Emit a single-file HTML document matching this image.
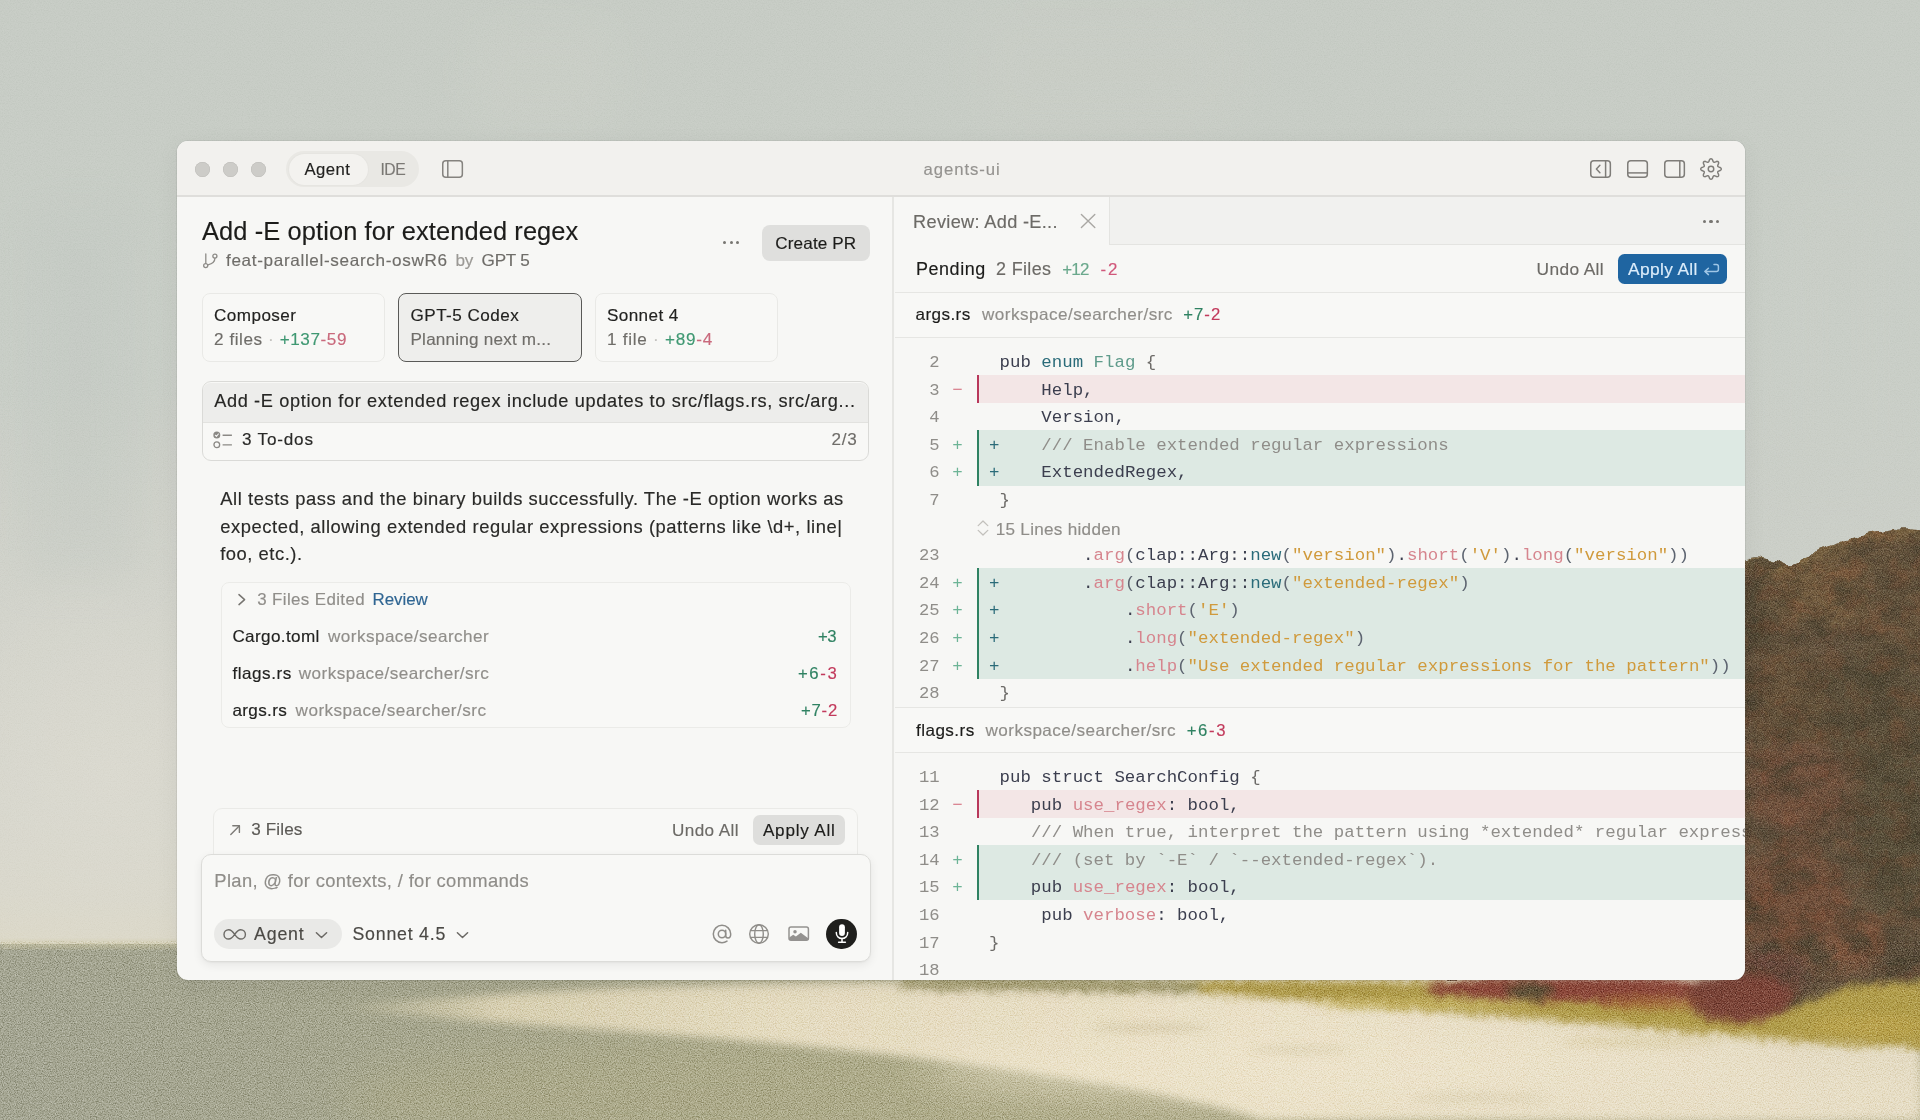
<!DOCTYPE html>
<html><head><meta charset="utf-8"><title>agents-ui</title>
<style>
html,body{margin:0;padding:0}
body{width:1920px;height:1120px;overflow:hidden;position:relative;background:#c8cdc6;font-family:'Liberation Sans', sans-serif}
.t{position:absolute;white-space:pre;margin:0;-webkit-text-stroke:.16px currentColor}
.t.m{-webkit-text-stroke:0}
#win{position:absolute;left:177px;top:141px;width:1568px;height:839px;border-radius:11px;overflow:hidden;background:#f7f7f5;box-shadow:0 0 0 1px rgba(60,60,50,.07),0 6px 26px rgba(40,40,30,.055),0 1px 3px rgba(40,40,30,.04)}
#pg{position:absolute;left:-177px;top:-141px;width:1920px;height:1120px;will-change:transform}
svg.i{position:absolute;overflow:visible}
.g{color:#2f8262} .r{color:#c23a5c}
</style></head><body>
<svg id="bg" width="1920" height="1120" viewBox="0 0 1920 1120" style="position:absolute;left:0;top:0">
<defs>
<linearGradient id="sky" x1="0" y1="0" x2="0" y2="1120" gradientUnits="userSpaceOnUse">
<stop offset="0" stop-color="#c7ccc5"/>
<stop offset="0.30" stop-color="#c9cec7"/>
<stop offset="0.55" stop-color="#cccfc8"/>
<stop offset="0.72" stop-color="#d2d3ca"/>
<stop offset="0.80" stop-color="#d7d5c7"/>
<stop offset="0.845" stop-color="#dcd7c2"/>
</linearGradient>
<radialGradient id="haze" cx="110" cy="780" r="400" gradientUnits="userSpaceOnUse">
<stop offset="0" stop-color="#dddbd1" stop-opacity=".8"/>
<stop offset="1" stop-color="#dddbd1" stop-opacity="0"/>
</radialGradient>
<linearGradient id="gnd" x1="0" y1="0" x2="1400" y2="0" gradientUnits="userSpaceOnUse">
<stop offset="0" stop-color="#a5a693"/>
<stop offset="0.3" stop-color="#a7a78f"/>
<stop offset="0.6" stop-color="#acaa8c"/>
<stop offset="1" stop-color="#b2ad8a"/>
</linearGradient>
<linearGradient id="sand" x1="340" y1="0" x2="1920" y2="0" gradientUnits="userSpaceOnUse">
<stop offset="0" stop-color="#cfc8a8" stop-opacity=".2"/>
<stop offset="0.10" stop-color="#ddd4b6" stop-opacity=".9"/>
<stop offset="0.28" stop-color="#e5dcc1"/>
<stop offset="0.6" stop-color="#eae1c8"/>
<stop offset="1" stop-color="#e3dac2"/>
</linearGradient>
<filter id="b2" x="-5%" y="-5%" width="110%" height="110%"><feGaussianBlur stdDeviation="2"/></filter>
<filter id="b4" x="-10%" y="-10%" width="120%" height="120%"><feGaussianBlur stdDeviation="4"/></filter>
<filter id="b8" x="-20%" y="-20%" width="140%" height="140%"><feGaussianBlur stdDeviation="8"/></filter>
<filter id="b20" x="-30%" y="-30%" width="160%" height="160%"><feGaussianBlur stdDeviation="20"/></filter>
<filter id="grain" x="0" y="0" width="100%" height="100%" color-interpolation-filters="sRGB">
<feTurbulence type="fractalNoise" baseFrequency="0.85" numOctaves="2" seed="7"/>
<feColorMatrix type="matrix" values="1.6 0 0 0 -0.3  1.6 0 0 0 -0.3  1.6 0 0 0 -0.3  0 0 0 0 1"/>
</filter>
<filter id="mottD" x="0" y="0" width="100%" height="100%" color-interpolation-filters="sRGB">
<feTurbulence type="fractalNoise" baseFrequency="0.03 0.045" numOctaves="3" seed="11"/>
<feColorMatrix type="matrix" values="0 0 0 0 0.30  0 0 0 0 0.27  0 0 0 0 0.20  2.4 1.2 0 0 -1.55"/>
</filter>
<filter id="mottR" x="0" y="0" width="100%" height="100%" color-interpolation-filters="sRGB">
<feTurbulence type="fractalNoise" baseFrequency="0.045 0.055" numOctaves="3" seed="29"/>
<feColorMatrix type="matrix" values="0 0 0 0 0.62  0 0 0 0 0.32  0 0 0 0 0.20  0 2.6 1.0 0 -1.65"/>
</filter>
<filter id="mottF" x="0" y="0" width="100%" height="100%" color-interpolation-filters="sRGB">
<feTurbulence type="fractalNoise" baseFrequency="0.22" numOctaves="2" seed="5"/>
<feColorMatrix type="matrix" values="0 0 0 0 0.25  0 0 0 0 0.2  0 0 0 0 0.14  1.8 1.0 0 0 -1.3"/>
</filter>
<filter id="rough" x="-5%" y="-5%" width="110%" height="110%">
<feTurbulence type="fractalNoise" baseFrequency="0.09 0.07" numOctaves="2" seed="3" result="t"/>
<feDisplacementMap in="SourceGraphic" in2="t" scale="9" xChannelSelector="R" yChannelSelector="G"/>
<feGaussianBlur stdDeviation="0.7"/>
</filter>
<clipPath id="treeclip"><path d="M1380 978 L1380 660 C1460 630 1540 612 1620 596 C1680 584 1720 570 1746 559 C1756 556 1766 558 1778 563 C1788 568 1794 568 1802 560 C1816 548 1834 546 1848 540 C1864 533 1880 532 1896 530 C1906 529 1914 530 1920 530 L1970 530 L1970 990 L1920 990 C1880 990 1850 994 1826 1004 C1810 1012 1796 1016 1780 1018 C1766 1016 1752 1006 1744 990 L1740 978Z"/></clipPath>
</defs>
<rect width="1920" height="1120" fill="url(#sky)"/>
<rect width="700" height="1000" fill="url(#haze)"/>
<!-- faint painterly patches in sky -->
<g opacity=".4" filter="url(#b20)">
<rect x="470" y="20" width="150" height="110" fill="#ced1c9"/>
<rect x="980" y="10" width="260" height="120" fill="#cccfc7"/>
<rect x="1780" y="180" width="120" height="300" fill="#cbcfc8"/>
<rect x="20" y="200" width="120" height="380" fill="#c3c9c3"/>
</g>
<!-- ground -->
<path d="M0 944 L455 944 L468 941 L1920 941 L1920 1120 L0 1120Z" fill="url(#gnd)"/>
<path d="M0 941 L640 939 L640 947 L0 949Z" fill="#cdc7a6" opacity=".5" filter="url(#b2)"/>
<ellipse cx="760" cy="1100" rx="420" ry="60" fill="#b1ad88" opacity=".45" filter="url(#b20)"/>
<!-- sand -->
<g filter="url(#b4)">
<path d="M340 1007 C430 998 520 992 640 987 C760 983 860 982 960 981 L1920 968 L1920 1120 L1262 1120 C1200 1100 1120 1086 1000 1069 C880 1052 740 1040 620 1031 C500 1023 400 1016 340 1007Z" fill="url(#sand)"/>
</g>
<g filter="url(#b20)" opacity=".6">
<ellipse cx="1350" cy="1068" rx="430" ry="30" fill="#efe6cf"/>
<ellipse cx="1760" cy="1096" rx="260" ry="28" fill="#ebe2cb"/>
</g>
<g filter="url(#b4)" opacity=".5">
<ellipse cx="1150" cy="1028" rx="60" ry="4" fill="#cbbf9c"/>
<ellipse cx="1300" cy="1050" rx="50" ry="4" fill="#d4c9a8"/>
<ellipse cx="1480" cy="1098" rx="70" ry="5" fill="#d9cfb0"/>
<ellipse cx="1640" cy="1042" rx="80" ry="6" fill="#d8cba0"/>
</g>
<!-- trees -->
<g filter="url(#rough)"><g clip-path="url(#treeclip)">
<rect x="1380" y="500" width="600" height="520" fill="#6a5843"/>
<g filter="url(#b8)">
<ellipse cx="1765" cy="600" rx="30" ry="50" fill="#5a503b"/>
<ellipse cx="1835" cy="590" rx="70" ry="40" fill="#765f42"/>
<ellipse cx="1900" cy="600" rx="40" ry="70" fill="#6a583f"/>
<ellipse cx="1860" cy="720" rx="80" ry="70" fill="#5e523d"/>
<ellipse cx="1785" cy="700" rx="40" ry="60" fill="#68543d"/>
<ellipse cx="1800" cy="790" rx="50" ry="50" fill="#74543f"/>
<ellipse cx="1895" cy="830" rx="40" ry="90" fill="#5d523e"/>
<ellipse cx="1790" cy="900" rx="56" ry="50" fill="#75523e"/>
<ellipse cx="1860" cy="945" rx="34" ry="26" fill="#80593f"/>
<ellipse cx="1900" cy="960" rx="30" ry="30" fill="#5e513c"/>
<ellipse cx="1770" cy="975" rx="36" ry="26" fill="#6c4a3c"/>
<ellipse cx="1600" cy="992" rx="140" ry="14" fill="#854a38"/>
</g>
<path d="M1620 596 C1680 584 1720 570 1746 559 C1756 556 1766 558 1778 563 C1788 568 1794 568 1802 560 C1816 548 1834 546 1848 540 C1864 533 1880 532 1896 530 C1906 529 1914 530 1970 530" fill="none" stroke="#927548" stroke-width="16" opacity=".7" filter="url(#b4)"/>
<path d="M1746 562 C1756 559 1766 561 1782 568" fill="none" stroke="#554c38" stroke-width="14" opacity=".8" filter="url(#b4)"/>
<rect x="1380" y="500" width="600" height="520" filter="url(#mottD)" opacity=".7"/>
<rect x="1380" y="500" width="600" height="520" filter="url(#mottR)" opacity=".2"/>
<rect x="1380" y="500" width="600" height="520" filter="url(#mottF)" opacity=".45"/>
</g></g>
<!-- grass -->
<g filter="url(#rough)"><g filter="url(#b4)">
<path d="M1180 981 C1300 979 1420 982 1520 986 C1600 990 1700 1000 1764 1012 C1800 1010 1826 992 1850 986 C1880 982 1900 982 1920 982 L1970 982 L1970 1050 L1920 1048 C1850 1046 1780 1040 1700 1033 C1620 1026 1560 1020 1500 1016 C1420 1010 1340 1003 1300 1000 C1260 997 1220 994 1180 991Z" fill="#b29e4b"/>
<path d="M900 980 C1000 978 1100 979 1200 982 L1200 993 C1100 990 1000 990 900 988Z" fill="#968f5e" opacity=".9"/>
</g>
<g filter="url(#b4)">
<ellipse cx="1575" cy="989" rx="150" ry="13" fill="#8f4a3b"/>
<ellipse cx="1530" cy="991" rx="24" ry="9" fill="#5e5139"/>
<ellipse cx="1738" cy="998" rx="54" ry="24" fill="#7d4439"/>
<ellipse cx="1650" cy="1003" rx="50" ry="6" fill="#a2653a" opacity=".8"/>
<ellipse cx="1870" cy="1026" rx="60" ry="12" fill="#b9a34e"/>
<ellipse cx="1420" cy="1004" rx="110" ry="5" fill="#cdbb6c" opacity=".7"/>
</g></g>
<!-- film grain over everything -->
<g style="mix-blend-mode:soft-light"><rect x="0" y="941" width="1920" height="179" filter="url(#grain)" opacity=".7"/><g clip-path="url(#treeclip)"><rect x="1380" y="500" width="600" height="441" filter="url(#grain)" opacity=".45"/></g><rect width="1920" height="941" filter="url(#grain)" opacity=".12"/></g>
</svg>

<div id="win"><div id="pg">
<div style="position:absolute;left:177px;top:141px;width:1568px;height:55px;background:#f2f1ee"></div>
<div style="position:absolute;left:177px;top:195.2px;width:1568px;height:1.700000000000017px;background:#dfdedb"></div>
<div style="position:absolute;left:195.0px;top:161.5px;width:15px;height:15px;border-radius:50%;background:#cdccc8;box-shadow:inset 0 0 0 .5px #bdbcb8"></div>
<div style="position:absolute;left:222.8px;top:161.5px;width:15px;height:15px;border-radius:50%;background:#cdccc8;box-shadow:inset 0 0 0 .5px #bdbcb8"></div>
<div style="position:absolute;left:250.5px;top:161.5px;width:15px;height:15px;border-radius:50%;background:#cdccc8;box-shadow:inset 0 0 0 .5px #bdbcb8"></div>
<div style="position:absolute;left:286px;top:151px;width:133px;height:36px;background:#e9e8e4;border-radius:18px"></div>
<div style="position:absolute;left:289px;top:154px;width:78.5px;height:31px;background:#f3f2ef;border-radius:16px;box-shadow:0 0 2px rgba(0,0,0,.06)"></div>
<div id="tb_agent" class="t" style="left:304.40px;top:158.00px;font:400 16.72px/23px 'Liberation Sans', sans-serif;color:#222220;letter-spacing:0.486px;">Agent</div>
<div id="tb_ide" class="t" style="left:380.60px;top:159.02px;font:400 15.69px/22px 'Liberation Sans', sans-serif;color:#7b7975;letter-spacing:-0.578px;">IDE</div>
<svg class="i" style="left:441px;top:159px" width="24" height="20" viewBox="0 0 24 20" fill="none" stroke="#85837f" stroke-width="1.5"><rect x="1.75" y="1.75" width="19.6" height="16.4" rx="3"/><path d="M6.8 1.75v16.4"/></svg>
<div id="tb_title" class="t" style="left:923.50px;top:158.00px;font:400 16.72px/23px 'Liberation Sans', sans-serif;color:#959390;letter-spacing:0.941px;">agents-ui</div>
<svg class="i" style="left:1589px;top:159px" width="24" height="20" viewBox="0 0 24 20" fill="none" stroke="#7f7d79" stroke-width="1.5" stroke-linecap="round" stroke-linejoin="round"><rect x="1.75" y="1.75" width="19.6" height="16.4" rx="3"/><path d="M16.6 1.75v16.4"/><path d="M10.9 6.3 7.4 10l3.500 3.700"/></svg>
<svg class="i" style="left:1626px;top:159px" width="24" height="20" viewBox="0 0 24 20" fill="none" stroke="#7f7d79" stroke-width="1.5"><rect x="1.75" y="1.75" width="19.6" height="16.4" rx="3"/><path d="M1.75 13.9h19.6"/></svg>
<svg class="i" style="left:1662.5px;top:159px" width="24" height="20" viewBox="0 0 24 20" fill="none" stroke="#7f7d79" stroke-width="1.5"><rect x="1.75" y="1.75" width="19.6" height="16.4" rx="3"/><path d="M16.8 1.75v16.4"/></svg>
<svg class="i" style="left:1699px;top:157px" width="24" height="24" viewBox="0 0 24 24" fill="none" stroke="#7f7d79" stroke-width="1.45" stroke-linejoin="round"><path d="M22.25 12.00 L22.13 12.53 L21.80 13.03 L21.25 13.47 L20.37 13.78 L19.70 14.06 L19.21 14.34 L18.89 14.64 L18.74 15.00 L18.75 15.44 L18.90 15.98 L19.18 16.66 L19.58 17.51 L19.66 18.20 L19.54 18.79 L19.25 19.25 L18.79 19.54 L18.20 19.66 L17.51 19.58 L16.66 19.18 L15.98 18.90 L15.44 18.75 L15.00 18.74 L14.64 18.89 L14.34 19.21 L14.06 19.70 L13.78 20.37 L13.47 21.25 L13.03 21.80 L12.53 22.13 L12.00 22.25 L11.47 22.13 L10.97 21.80 L10.53 21.25 L10.22 20.37 L9.94 19.70 L9.66 19.21 L9.36 18.89 L9.00 18.74 L8.56 18.75 L8.02 18.90 L7.34 19.18 L6.49 19.58 L5.80 19.66 L5.21 19.54 L4.75 19.25 L4.46 18.79 L4.34 18.20 L4.42 17.51 L4.82 16.66 L5.10 15.98 L5.25 15.44 L5.26 15.00 L5.11 14.64 L4.79 14.34 L4.30 14.06 L3.63 13.78 L2.75 13.47 L2.20 13.03 L1.87 12.53 L1.75 12.00 L1.87 11.47 L2.20 10.97 L2.75 10.53 L3.63 10.22 L4.30 9.94 L4.79 9.66 L5.11 9.36 L5.26 9.00 L5.25 8.56 L5.10 8.02 L4.82 7.34 L4.42 6.49 L4.34 5.80 L4.46 5.21 L4.75 4.75 L5.21 4.46 L5.80 4.34 L6.49 4.42 L7.34 4.82 L8.02 5.10 L8.56 5.25 L9.00 5.26 L9.36 5.11 L9.66 4.79 L9.94 4.30 L10.22 3.63 L10.53 2.75 L10.97 2.20 L11.47 1.87 L12.00 1.75 L12.53 1.87 L13.03 2.20 L13.47 2.75 L13.78 3.63 L14.06 4.30 L14.34 4.79 L14.64 5.11 L15.00 5.26 L15.44 5.25 L15.98 5.10 L16.66 4.82 L17.51 4.42 L18.20 4.34 L18.79 4.46 L19.25 4.75 L19.54 5.21 L19.66 5.80 L19.58 6.49 L19.18 7.34 L18.90 8.02 L18.75 8.56 L18.74 9.00 L18.89 9.36 L19.21 9.66 L19.70 9.94 L20.37 10.22 L21.25 10.53 L21.80 10.97 L22.13 11.47Z"/><circle cx="12" cy="12" r="2.75"/></svg>
<div style="position:absolute;left:892.4px;top:196.9px;width:1.8999999999999773px;height:783.1px;background:#e6e6e3"></div>
<div id="h_title" class="t" style="left:202.00px;top:213.00px;font:400 25.4px/36px 'Liberation Sans', sans-serif;color:#1c1c1a;letter-spacing:0.118px;">Add -E option for extended regex</div>
<svg class="i" style="left:202px;top:251.5px" width="17" height="18" viewBox="0 0 17 18" fill="none" stroke="#8e8c88" stroke-width="1.3" stroke-linecap="round"><circle cx="3.7" cy="13.6" r="2.05"/><circle cx="12.9" cy="4.1" r="2.05"/><path d="M3.8 1.9v9.5"/><path d="M12.9 6.300c0 4.500-3.400 5.700-6.900 6.500"/></svg>
<div id="h_branch" class="t" style="left:226.00px;top:249.01px;font:400 17.13px/24px 'Liberation Sans', sans-serif;color:#6f6d69;letter-spacing:0.662px;">feat-parallel-search-oswR6</div>
<div id="h_by" class="t" style="left:455.40px;top:249.01px;font:400 17.13px/24px 'Liberation Sans', sans-serif;color:#9b9995;letter-spacing:-0.178px;">by</div>
<div id="h_gpt" class="t" style="left:481.60px;top:249.01px;font:400 17.13px/24px 'Liberation Sans', sans-serif;color:#6f6d69;letter-spacing:-0.260px;">GPT 5</div>
<div style="position:absolute;left:723.1px;top:241.0px;width:3.2px;height:3.2px;border-radius:50%;background:#777571"></div>
<div style="position:absolute;left:729.5px;top:241.0px;width:3.2px;height:3.2px;border-radius:50%;background:#777571"></div>
<div style="position:absolute;left:735.9px;top:241.0px;width:3.2px;height:3.2px;border-radius:50%;background:#777571"></div>
<div style="position:absolute;left:762px;top:224.5px;width:107.5px;height:36.5px;background:#dfdfdd;border-radius:8px"></div>
<div id="h_pr" class="t" style="left:775.30px;top:232.01px;font:400 17.13px/24px 'Liberation Sans', sans-serif;color:#1c1c1a;letter-spacing:0.128px;">Create PR</div>
<div style="position:absolute;left:201.5px;top:293px;width:183.5px;height:69px;box-sizing:border-box;border:1.5px solid #e9e9e6;border-radius:8px;background:#f8f8f6"></div>
<div style="position:absolute;left:398px;top:293px;width:183.5px;height:69px;box-sizing:border-box;border:1.5px solid #5a5a58;border-radius:8px;background:#eeeeec"></div>
<div style="position:absolute;left:594.8px;top:293px;width:183.5px;height:69px;box-sizing:border-box;border:1.5px solid #e9e9e6;border-radius:8px;background:#f8f8f6"></div>
<div id="c1a" class="t" style="left:214.00px;top:304.01px;font:400 17.13px/24px 'Liberation Sans', sans-serif;color:#222220;letter-spacing:0.438px;">Composer</div>
<div id="c1b" class="t" style="left:214.00px;top:328.01px;font:400 17.13px/24px 'Liberation Sans', sans-serif;color:#6f6d69;letter-spacing:0.575px;">2 files<span style="color:#c4c3bf"> · </span><span style="color:#3f9872">+137</span><span style="color:#c9697c">-59</span></div>
<div id="c2a" class="t" style="left:410.50px;top:304.01px;font:400 17.13px/24px 'Liberation Sans', sans-serif;color:#222220;letter-spacing:0.464px;">GPT-5 Codex</div>
<div id="c2b" class="t" style="left:410.50px;top:328.01px;font:400 17.13px/24px 'Liberation Sans', sans-serif;color:#6f6d69;letter-spacing:0.209px;">Planning next m...</div>
<div id="c3a" class="t" style="left:606.90px;top:304.01px;font:400 17.13px/24px 'Liberation Sans', sans-serif;color:#222220;letter-spacing:0.414px;">Sonnet 4</div>
<div id="c3b" class="t" style="left:607.00px;top:328.01px;font:400 17.13px/24px 'Liberation Sans', sans-serif;color:#6f6d69;letter-spacing:0.745px;">1 file<span style="color:#c4c3bf"> · </span><span style="color:#3f9872">+89</span><span style="color:#c9697c">-4</span></div>
<div style="position:absolute;left:201.5px;top:381px;width:667.5px;height:79.5px;box-sizing:border-box;border:1.5px solid #dadad7;border-radius:9px;background:#f8f8f6;overflow:hidden"></div>
<div style="position:absolute;left:203px;top:382.5px;width:664.5px;height:40.0px;background:#ededeb;border-radius:7.5px 7.5px 0 0;border-bottom:1px solid #e2e2df;box-sizing:border-box"></div>
<div id="p_msg" class="t" style="left:214.20px;top:389.00px;font:400 18.16px/25px 'Liberation Sans', sans-serif;color:#262624;letter-spacing:0.645px;">Add -E option for extended regex include updates to src/flags.rs, src/arg...</div>
<svg class="i" style="left:213px;top:430.5px" width="20" height="19" viewBox="0 0 20 19" fill="none" stroke="#8b8985" stroke-width="1.3"><circle cx="3.8" cy="4.1" r="3.5" fill="#8b8985" stroke="none"/><path d="M2.300 4.2l1.100 1.200 2-2.400" stroke="#f8f8f6" stroke-width="1.05" stroke-linecap="round" stroke-linejoin="round"/><circle cx="3.8" cy="13.8" r="2.85"/><path d="M9.600 4.300h9.300M9.600 13.900h9.300" stroke-width="1.4"/></svg>
<div id="p_todo" class="t" style="left:242.00px;top:428.01px;font:400 17.13px/24px 'Liberation Sans', sans-serif;color:#2a2a28;letter-spacing:0.812px;">3 To-dos</div>
<div id="p_23" class="t" style="left:831.60px;top:428.01px;font:400 17.13px/24px 'Liberation Sans', sans-serif;color:#6f6d69;letter-spacing:0.752px;">2/3</div>
<div id="pa1" class="t" style="left:220.25px;top:486.02px;font:400 18.37px/26px 'Liberation Sans', sans-serif;color:#2a2a28;letter-spacing:0.556px;">All tests pass and the binary builds successfully. The -E option works as</div>
<div id="pa2" class="t" style="left:220.25px;top:514.02px;font:400 18.37px/26px 'Liberation Sans', sans-serif;color:#2a2a28;letter-spacing:0.553px;">expected, allowing extended regular expressions (patterns like \d+, line|</div>
<div id="pa3" class="t" style="left:220.25px;top:541.02px;font:400 18.37px/26px 'Liberation Sans', sans-serif;color:#2a2a28;letter-spacing:0.522px;">foo, etc.).</div>
<div style="position:absolute;left:220.5px;top:581.5px;width:630.0px;height:146.0px;box-sizing:border-box;border:1.5px solid #ebebe8;border-radius:8px;background:#f8f8f6"></div>
<svg class="i" style="left:236px;top:592px" width="12" height="15" viewBox="0 0 12 15" fill="none" stroke="#777571" stroke-width="1.5" stroke-linecap="round" stroke-linejoin="round"><path d="M3 2.6l5.6 5-5.6 5"/></svg>
<div id="f_hd" class="t" style="left:257.20px;top:588.01px;font:400 16.92px/24px 'Liberation Sans', sans-serif;color:#908e8a;letter-spacing:0.382px;">3 Files Edited</div>
<div id="f_rev" class="t" style="left:372.50px;top:588.01px;font:400 16.92px/24px 'Liberation Sans', sans-serif;color:#2f6592;letter-spacing:-0.028px;">Review</div>
<div id="f1a" class="t" style="left:232.40px;top:625.01px;font:400 17.13px/24px 'Liberation Sans', sans-serif;color:#222220;letter-spacing:0.368px;">Cargo.toml</div>
<div id="f1b" class="t" style="left:328.00px;top:625.01px;font:400 17.13px/24px 'Liberation Sans', sans-serif;color:#908e8a;letter-spacing:0.449px;">workspace/searcher</div>
<div id="f2a" class="t" style="left:232.40px;top:662.01px;font:400 17.13px/24px 'Liberation Sans', sans-serif;color:#222220;letter-spacing:0.535px;">flags.rs</div>
<div id="f2b" class="t" style="left:298.80px;top:662.01px;font:400 17.13px/24px 'Liberation Sans', sans-serif;color:#908e8a;letter-spacing:0.442px;">workspace/searcher/src</div>
<div id="f3a" class="t" style="left:232.40px;top:699.01px;font:400 17.13px/24px 'Liberation Sans', sans-serif;color:#222220;letter-spacing:0.351px;">args.rs</div>
<div id="f3b" class="t" style="left:295.60px;top:699.01px;font:400 17.13px/24px 'Liberation Sans', sans-serif;color:#908e8a;letter-spacing:0.463px;">workspace/searcher/src</div>
<div id="f1c" class="t" style="left:818.00px;top:625.00px;font:400 16.72px/23px 'Liberation Sans', sans-serif;color:#2f8262;letter-spacing:-0.447px;">+3</div>
<div id="f2c" class="t" style="left:797.90px;top:662.01px;font:400 16.72px/23px 'Liberation Sans', sans-serif;color:#2f8262;letter-spacing:1.665px;">+6<span class="r">-3</span></div>
<div id="f3c" class="t" style="left:800.90px;top:699.01px;font:400 16.72px/23px 'Liberation Sans', sans-serif;color:#2f8262;letter-spacing:0.831px;">+7<span class="r">-2</span></div>
<div style="position:absolute;left:212.5px;top:807.5px;width:645.5px;height:62.5px;box-sizing:border-box;border:1.5px solid #eaeae7;border-radius:9px 9px 0 0;background:#f8f8f6"></div>
<svg class="i" style="left:229px;top:823.5px" width="12" height="12" viewBox="0 0 12 12" fill="none" stroke="#7c7a76" stroke-width="1.4" stroke-linecap="round" stroke-linejoin="round"><path d="M1.8 10.4 10.2 2"/><path d="M3.8 1.8h6.6v6.6"/></svg>
<div id="b_files" class="t" style="left:251.25px;top:818.01px;font:400 17.13px/24px 'Liberation Sans', sans-serif;color:#5c5a56;letter-spacing:0.124px;">3 Files</div>
<div id="b_undo" class="t" style="left:672.10px;top:819.02px;font:400 17.13px/24px 'Liberation Sans', sans-serif;color:#6c6a66;letter-spacing:0.381px;">Undo All</div>
<div style="position:absolute;left:753.3px;top:814.6px;width:91.70000000000005px;height:30.0px;background:#dededc;border-radius:7px"></div>
<div id="b_apply" class="t" style="left:762.90px;top:819.02px;font:400 17.13px/24px 'Liberation Sans', sans-serif;color:#1c1c1a;letter-spacing:0.797px;">Apply All</div>
<div style="position:absolute;left:200.5px;top:853.5px;width:670.0px;height:108.5px;box-sizing:border-box;border:1.5px solid #dcdcd9;border-radius:10px;background:#f8f8f6;box-shadow:0 3px 10px rgba(0,0,0,.07),0 1px 2px rgba(0,0,0,.04)"></div>
<div id="i_ph" class="t" style="left:214.30px;top:868.02px;font:400 18.37px/26px 'Liberation Sans', sans-serif;color:#8f8d89;letter-spacing:0.348px;">Plan, @ for contexts, / for commands</div>
<div style="position:absolute;left:213.75px;top:918.75px;width:128.05px;height:30.0px;background:#e9e9e7;border-radius:15px"></div>
<svg class="i" style="left:223.2px;top:928.7px" width="24" height="12" viewBox="0 0 24 12" fill="none" stroke="#6b6965" stroke-width="1.4"><path d="M11.700 5.400C9.900 2.800 8.300.75 5.700.75 3.100.75 1 2.800 1 5.400s2.100 4.650 4.700 4.650c2.600 0 4.200-2.050 6-4.650s3.400-4.650 6-4.650 4.700 2.050 4.700 4.650-2.100 4.650-4.700 4.650-4.200-2.050-6-4.650z"/></svg>
<div id="i_agent" class="t" style="left:254.00px;top:922.01px;font:400 17.75px/25px 'Liberation Sans', sans-serif;color:#4b4945;letter-spacing:0.840px;">Agent</div>
<svg class="i" style="left:315px;top:930px" width="13" height="10" viewBox="0 0 13 10" fill="none" stroke="#6b6965" stroke-width="1.5" stroke-linecap="round" stroke-linejoin="round"><path d="M1.400 2.700 6.500 7.500l5.100-4.800"/></svg>
<div id="i_model" class="t" style="left:352.50px;top:922.01px;font:400 17.75px/25px 'Liberation Sans', sans-serif;color:#4b4945;letter-spacing:0.769px;">Sonnet 4.5</div>
<svg class="i" style="left:456px;top:930px" width="13" height="10" viewBox="0 0 13 10" fill="none" stroke="#6b6965" stroke-width="1.5" stroke-linecap="round" stroke-linejoin="round"><path d="M1.400 2.700 6.500 7.500l5.100-4.800"/></svg>
<svg class="i" style="left:710.6px;top:922.8px" width="22" height="22" viewBox="0 0 22 22" fill="none" stroke="#8f8d89" stroke-width="1.5" stroke-linecap="round"><circle cx="11" cy="11" r="3.7"/><path d="M14.7 7.3v5.200c0 1.500 1 2.500 2.300 2.500 1.600 0 2.700-1.500 2.700-4 0-4.800-3.900-8.700-8.700-8.700S2.300 6.200 2.300 11s3.900 8.700 8.700 8.700c1.900 0 3.600-.6 5-1.600"/></svg>
<svg class="i" style="left:747.5px;top:922.5px" width="22" height="22" viewBox="0 0 22 22" fill="none" stroke="#8f8d89" stroke-width="1.4"><circle cx="11" cy="11" r="9.3"/><ellipse cx="11" cy="11" rx="4.300" ry="9.3"/><path d="M2.600 7.600h16.800M2.600 14.400h16.800"/></svg>
<svg class="i" style="left:788px;top:925.75px" width="22" height="17" viewBox="0 0 22 17" fill="none" stroke="#949290" stroke-width="1.5" stroke-linejoin="round"><rect x="1" y="1" width="19.4" height="13.3" rx="2"/><circle cx="7" cy="5.700" r="1.75" fill="#949290" stroke="none"/><path d="M1.200 13.900v-2.300l4-2.800 2.700 1.800 4.900-3.900 7.400 5.600v1.600z" fill="#949290" stroke="none"/></svg>
<div style="position:absolute;left:826.4px;top:918.7px;width:30.6px;height:30.6px;border-radius:50%;background:#1f1f1d"></div>
<svg class="i" style="left:832.700px;top:924px" width="18" height="21" viewBox="0 0 18 21" fill="none" stroke="#fff" stroke-width="1.5" stroke-linecap="round"><rect x="6.100" y="0.300" width="5.800" height="11.700" rx="2.900" fill="#fff" stroke="none"/><path d="M3.300 8.600c0 3.500 2.500 5.900 5.700 5.900s5.700-2.400 5.700-5.900"/><path d="M9 14.600v3.500M5.600 18.300h6.800"/></svg>
<div style="position:absolute;left:894.3px;top:196.9px;width:850.7px;height:48.599999999999994px;background:#f1f1ef;border-bottom:1px solid #e4e4e1;box-sizing:border-box"></div>
<div style="position:absolute;left:894.3px;top:196.9px;width:215.70000000000005px;height:48.599999999999994px;background:#f7f7f5;border-right:1px solid #e4e4e1;box-sizing:border-box"></div>
<div id="t_tab" class="t" style="left:913.10px;top:210.00px;font:400 18.16px/25px 'Liberation Sans', sans-serif;color:#6c6a66;letter-spacing:0.321px;">Review: Add -E...</div>
<svg class="i" style="left:1079.6px;top:213px" width="16" height="16" viewBox="0 0 16 16" fill="none" stroke="#a9a7a3" stroke-width="1.4" stroke-linecap="round"><path d="M1.4 1.6l13.4 13M14.8 1.6 1.4 14.6"/></svg>
<div style="position:absolute;left:1702.9px;top:219.70000000000002px;width:3.2px;height:3.2px;border-radius:50%;background:#777571"></div>
<div style="position:absolute;left:1709.4px;top:219.70000000000002px;width:3.2px;height:3.2px;border-radius:50%;background:#777571"></div>
<div style="position:absolute;left:1715.9px;top:219.70000000000002px;width:3.2px;height:3.2px;border-radius:50%;background:#777571"></div>
<div style="position:absolute;left:894.5px;top:292px;width:850.5px;height:1px;background:#e6e6e3"></div>
<div id="pd1" class="t" style="left:915.90px;top:257.00px;font:400 17.96px/25px 'Liberation Sans', sans-serif;color:#1c1c1a;letter-spacing:0.593px;">Pending</div>
<div id="pd2" class="t" style="left:996.00px;top:257.00px;font:400 17.96px/25px 'Liberation Sans', sans-serif;color:#6c6a66;letter-spacing:0.359px;">2 Files</div>
<div id="pd3" class="t" style="left:1062.20px;top:258.00px;font:400 16.92px/24px 'Liberation Sans', sans-serif;color:#6aa88c;letter-spacing:-0.744px;">+12</div>
<div id="pd4" class="t" style="left:1100.60px;top:258.00px;font:400 16.92px/24px 'Liberation Sans', sans-serif;color:#d0577a;letter-spacing:1.853px;">-2</div>
<div id="pd5" class="t" style="left:1536.60px;top:257.02px;font:400 17.34px/24px 'Liberation Sans', sans-serif;color:#6c6a66;letter-spacing:0.350px;">Undo All</div>
<div style="position:absolute;left:1617.5px;top:253.6px;width:109.0px;height:30.200000000000017px;background:#1f65a1;border-radius:6.5px"></div>
<div id="pd6" class="t" style="left:1628.00px;top:257.02px;font:400 17.34px/24px 'Liberation Sans', sans-serif;color:#dcedfb;letter-spacing:0.366px;">Apply All</div>
<svg class="i" style="left:1703px;top:262px" width="17" height="14" viewBox="0 0 17 14" fill="none" stroke="#9fc6e6" stroke-width="1.5" stroke-linecap="round" stroke-linejoin="round"><path d="M11 2.600h2.400c1.300 0 2 .7 2 2v2.800c0 1.300-.7 2-2 2H2.200"/><path d="M5.400 6.200 2 9.400l3.400 3.200"/></svg>
<div style="position:absolute;left:894.5px;top:293px;width:850.5px;height:44.5px;background:#f8f8f6;border-bottom:1px solid #e6e6e3;box-sizing:border-box"></div>
<div id="fan" class="t" style="left:915.50px;top:303.01px;font:400 17.13px/24px 'Liberation Sans', sans-serif;color:#1c1c1a;letter-spacing:0.409px;">args.rs</div>
<div id="fap" class="t" style="left:982.00px;top:303.01px;font:400 17.13px/24px 'Liberation Sans', sans-serif;color:#908e8a;letter-spacing:0.463px;">workspace/searcher/src</div>
<div id="fas" class="t" style="left:1183.30px;top:303.00px;font:400 16.72px/23px 'Liberation Sans', sans-serif;color:#2f8262;letter-spacing:0.998px;">+7<span class="r">-2</span></div>
<div style="position:absolute;left:894.5px;top:707px;width:850.5px;height:1px;background:#e6e6e3"></div>
<div style="position:absolute;left:894.5px;top:708px;width:850.5px;height:44.5px;background:#f8f8f6;border-bottom:1px solid #e6e6e3;box-sizing:border-box"></div>
<div id="fbn" class="t" style="left:916.00px;top:719.02px;font:400 17.13px/24px 'Liberation Sans', sans-serif;color:#1c1c1a;letter-spacing:0.442px;">flags.rs</div>
<div id="fbp" class="t" style="left:985.50px;top:719.02px;font:400 17.13px/24px 'Liberation Sans', sans-serif;color:#908e8a;letter-spacing:0.444px;">workspace/searcher/src</div>
<div id="fbs" class="t" style="left:1186.75px;top:719.00px;font:400 16.72px/23px 'Liberation Sans', sans-serif;color:#2f8262;letter-spacing:1.615px;">+6<span class="r">-3</span></div>
<div id="n2_367" class="t m" style="left:929.30px;top:351.01px;font:400 17.2px/24px 'Liberation Mono', monospace;color:#8f8d89;letter-spacing:0.000px;letter-spacing:-0.1px;">2</div>
<div id="c2_367" class="t m" style="left:989.10px;top:351.00px;font:400 17.4px/24px 'Liberation Mono', monospace;color:#3b3e4e;letter-spacing:0.000px;letter-spacing:0.008px;"> pub <span style="color:#2a6b79">enum</span> <span style="color:#5f9b8b">Flag</span> <span style="color:#6d6b68">{</span></div>
<div style="position:absolute;left:977px;top:375.1px;width:768px;height:27.700000000000045px;background:#f3e6e6"></div>
<div style="position:absolute;left:977px;top:375.1px;width:2.2000000000000455px;height:27.700000000000045px;background:#b8385b"></div>
<div id="m3_394" class="t m" style="left:952.20px;top:379.01px;font:400 17.4px/24px 'Liberation Mono', monospace;color:#d9828f;letter-spacing:0.000px;">−</div>
<div id="n3_394" class="t m" style="left:929.30px;top:379.00px;font:400 17.2px/24px 'Liberation Mono', monospace;color:#8f8d89;letter-spacing:0.000px;letter-spacing:-0.1px;">3</div>
<div id="c3_394" class="t m" style="left:989.10px;top:379.01px;font:400 17.4px/24px 'Liberation Mono', monospace;color:#3b3e4e;letter-spacing:0.000px;letter-spacing:0.008px;">     Help,</div>
<div id="n4_422" class="t m" style="left:929.30px;top:406.01px;font:400 17.2px/24px 'Liberation Mono', monospace;color:#8f8d89;letter-spacing:0.000px;letter-spacing:-0.1px;">4</div>
<div id="c4_422" class="t m" style="left:989.10px;top:406.02px;font:400 17.4px/24px 'Liberation Mono', monospace;color:#3b3e4e;letter-spacing:0.000px;letter-spacing:0.008px;">     Version,</div>
<div style="position:absolute;left:977px;top:430.3px;width:768px;height:27.700000000000045px;background:#dde9e3"></div>
<div style="position:absolute;left:977px;top:430.3px;width:2.2000000000000455px;height:27.700000000000045px;background:#2f8262"></div>
<div id="m5_449" class="t m" style="left:952.20px;top:434.01px;font:400 17.4px/24px 'Liberation Mono', monospace;color:#6db496;letter-spacing:0.000px;">+</div>
<div id="n5_449" class="t m" style="left:929.30px;top:434.00px;font:400 17.2px/24px 'Liberation Mono', monospace;color:#8f8d89;letter-spacing:0.000px;letter-spacing:-0.1px;">5</div>
<div id="c5_449" class="t m" style="left:989.10px;top:434.01px;font:400 17.4px/24px 'Liberation Mono', monospace;color:#3b3e4e;letter-spacing:0.000px;letter-spacing:0.008px;"><span style="color:#2a6b79">+</span>    <span style="color:#8f8d89">/// Enable extended regular expressions</span></div>
<div style="position:absolute;left:977px;top:457.9px;width:768px;height:27.700000000000045px;background:#dde9e3"></div>
<div style="position:absolute;left:977px;top:457.9px;width:2.2000000000000455px;height:27.700000000000045px;background:#2f8262"></div>
<div id="m6_477" class="t m" style="left:952.20px;top:461.01px;font:400 17.4px/24px 'Liberation Mono', monospace;color:#6db496;letter-spacing:0.000px;">+</div>
<div id="n6_477" class="t m" style="left:929.30px;top:461.00px;font:400 17.2px/24px 'Liberation Mono', monospace;color:#8f8d89;letter-spacing:0.000px;letter-spacing:-0.1px;">6</div>
<div id="c6_477" class="t m" style="left:989.10px;top:461.01px;font:400 17.4px/24px 'Liberation Mono', monospace;color:#3b3e4e;letter-spacing:0.000px;letter-spacing:0.008px;"><span style="color:#2a6b79">+</span>    ExtendedRegex,</div>
<div id="n7_505" class="t m" style="left:929.30px;top:489.01px;font:400 17.2px/24px 'Liberation Mono', monospace;color:#8f8d89;letter-spacing:0.000px;letter-spacing:-0.1px;">7</div>
<div id="c7_505" class="t m" style="left:989.10px;top:489.00px;font:400 17.4px/24px 'Liberation Mono', monospace;color:#3b3e4e;letter-spacing:0.000px;letter-spacing:0.008px;"> <span style="color:#6d6b68">}</span></div>
<svg class="i" style="left:976px;top:519px" width="14" height="18" viewBox="0 0 14 18" fill="none" stroke="#c2c0bc" stroke-width="1.3" stroke-linecap="round" stroke-linejoin="round"><path d="M2.200 6.600 7 2l4.800 4.600M2.200 11.400 7 16l4.800-4.600"/></svg>
<div id="hid" class="t" style="left:995.75px;top:518.01px;font:400 17.13px/24px 'Liberation Sans', sans-serif;color:#8f8d89;letter-spacing:0.280px;">15 Lines hidden</div>
<div id="n23_560" class="t m" style="left:919.00px;top:544.01px;font:400 17.2px/24px 'Liberation Mono', monospace;color:#8f8d89;letter-spacing:0.000px;letter-spacing:-0.1px;">23</div>
<div id="c23_560" class="t m" style="left:989.10px;top:544.02px;font:400 17.4px/24px 'Liberation Mono', monospace;color:#3b3e4e;letter-spacing:0.000px;letter-spacing:0.008px;">         .<span style="color:#d6858e">arg</span><span style="color:#5d6470">(</span>clap::Arg::<span style="color:#2a6b79">new</span><span style="color:#5d6470">(</span><span style="color:#d09a3c">"version"</span><span style="color:#5d6470">)</span>.<span style="color:#d6858e">short</span><span style="color:#5d6470">(</span><span style="color:#d09a3c">'V'</span><span style="color:#5d6470">)</span>.<span style="color:#d6858e">long</span><span style="color:#5d6470">(</span><span style="color:#d09a3c">"version"</span><span style="color:#5d6470">))</span></div>
<div style="position:absolute;left:977px;top:568.3px;width:768px;height:27.700000000000045px;background:#dde9e3"></div>
<div style="position:absolute;left:977px;top:568.3px;width:2.2000000000000455px;height:27.700000000000045px;background:#2f8262"></div>
<div id="m24_587" class="t m" style="left:952.20px;top:572.01px;font:400 17.4px/24px 'Liberation Mono', monospace;color:#6db496;letter-spacing:0.000px;">+</div>
<div id="n24_587" class="t m" style="left:919.00px;top:572.00px;font:400 17.2px/24px 'Liberation Mono', monospace;color:#8f8d89;letter-spacing:0.000px;letter-spacing:-0.1px;">24</div>
<div id="c24_587" class="t m" style="left:989.10px;top:572.01px;font:400 17.4px/24px 'Liberation Mono', monospace;color:#3b3e4e;letter-spacing:0.000px;letter-spacing:0.008px;"><span style="color:#2a6b79">+</span>        .<span style="color:#d6858e">arg</span><span style="color:#5d6470">(</span>clap::Arg::<span style="color:#2a6b79">new</span><span style="color:#5d6470">(</span><span style="color:#d09a3c">"extended-regex"</span><span style="color:#5d6470">)</span></div>
<div style="position:absolute;left:977px;top:595.9px;width:768px;height:27.700000000000045px;background:#dde9e3"></div>
<div style="position:absolute;left:977px;top:595.9px;width:2.2000000000000455px;height:27.700000000000045px;background:#2f8262"></div>
<div id="m25_615" class="t m" style="left:952.20px;top:599.01px;font:400 17.4px/24px 'Liberation Mono', monospace;color:#6db496;letter-spacing:0.000px;">+</div>
<div id="n25_615" class="t m" style="left:919.00px;top:599.00px;font:400 17.2px/24px 'Liberation Mono', monospace;color:#8f8d89;letter-spacing:0.000px;letter-spacing:-0.1px;">25</div>
<div id="c25_615" class="t m" style="left:989.10px;top:599.01px;font:400 17.4px/24px 'Liberation Mono', monospace;color:#3b3e4e;letter-spacing:0.000px;letter-spacing:0.008px;"><span style="color:#2a6b79">+</span>            .<span style="color:#d6858e">short</span><span style="color:#5d6470">(</span><span style="color:#d09a3c">'E'</span><span style="color:#5d6470">)</span></div>
<div style="position:absolute;left:977px;top:623.5px;width:768px;height:27.700000000000045px;background:#dde9e3"></div>
<div style="position:absolute;left:977px;top:623.5px;width:2.2000000000000455px;height:27.700000000000045px;background:#2f8262"></div>
<div id="m26_643" class="t m" style="left:952.20px;top:627.00px;font:400 17.4px/24px 'Liberation Mono', monospace;color:#6db496;letter-spacing:0.000px;">+</div>
<div id="n26_643" class="t m" style="left:919.00px;top:627.01px;font:400 17.2px/24px 'Liberation Mono', monospace;color:#8f8d89;letter-spacing:0.000px;letter-spacing:-0.1px;">26</div>
<div id="c26_643" class="t m" style="left:989.10px;top:627.00px;font:400 17.4px/24px 'Liberation Mono', monospace;color:#3b3e4e;letter-spacing:0.000px;letter-spacing:0.008px;"><span style="color:#2a6b79">+</span>            .<span style="color:#d6858e">long</span><span style="color:#5d6470">(</span><span style="color:#d09a3c">"extended-regex"</span><span style="color:#5d6470">)</span></div>
<div style="position:absolute;left:977px;top:651.1px;width:768px;height:27.700000000000045px;background:#dde9e3"></div>
<div style="position:absolute;left:977px;top:651.1px;width:2.2000000000000455px;height:27.700000000000045px;background:#2f8262"></div>
<div id="m27_670" class="t m" style="left:952.20px;top:655.01px;font:400 17.4px/24px 'Liberation Mono', monospace;color:#6db496;letter-spacing:0.000px;">+</div>
<div id="n27_670" class="t m" style="left:919.00px;top:655.00px;font:400 17.2px/24px 'Liberation Mono', monospace;color:#8f8d89;letter-spacing:0.000px;letter-spacing:-0.1px;">27</div>
<div id="c27_670" class="t m" style="left:989.10px;top:655.01px;font:400 17.4px/24px 'Liberation Mono', monospace;color:#3b3e4e;letter-spacing:0.000px;letter-spacing:0.008px;"><span style="color:#2a6b79">+</span>            .<span style="color:#d6858e">help</span><span style="color:#5d6470">(</span><span style="color:#d09a3c">"Use extended regular expressions for the pattern"</span><span style="color:#5d6470">))</span></div>
<div id="n28_698" class="t m" style="left:919.00px;top:682.01px;font:400 17.2px/24px 'Liberation Mono', monospace;color:#8f8d89;letter-spacing:0.000px;letter-spacing:-0.1px;">28</div>
<div id="c28_698" class="t m" style="left:989.10px;top:682.02px;font:400 17.4px/24px 'Liberation Mono', monospace;color:#3b3e4e;letter-spacing:0.000px;letter-spacing:0.008px;"> <span style="color:#6d6b68">}</span></div>
<div id="n11_781" class="t m" style="left:919.00px;top:766.00px;font:400 17.2px/24px 'Liberation Mono', monospace;color:#8f8d89;letter-spacing:0.000px;letter-spacing:-0.1px;">11</div>
<div id="c11_781" class="t m" style="left:989.10px;top:766.01px;font:400 17.4px/24px 'Liberation Mono', monospace;color:#3b3e4e;letter-spacing:0.000px;letter-spacing:0.008px;"> pub struct SearchConfig <span style="color:#6d6b68">{</span></div>
<div style="position:absolute;left:977px;top:790.0px;width:768px;height:27.700000000000045px;background:#f3e6e6"></div>
<div style="position:absolute;left:977px;top:790.0px;width:2.2000000000000455px;height:27.700000000000045px;background:#b8385b"></div>
<div id="m12_809" class="t m" style="left:952.20px;top:794.00px;font:400 17.4px/24px 'Liberation Mono', monospace;color:#d9828f;letter-spacing:0.000px;">−</div>
<div id="n12_809" class="t m" style="left:919.00px;top:794.01px;font:400 17.2px/24px 'Liberation Mono', monospace;color:#8f8d89;letter-spacing:0.000px;letter-spacing:-0.1px;">12</div>
<div id="c12_809" class="t m" style="left:989.10px;top:794.00px;font:400 17.4px/24px 'Liberation Mono', monospace;color:#3b3e4e;letter-spacing:0.000px;letter-spacing:0.008px;">    pub <span style="color:#d6858e">use_regex</span>: bool,</div>
<div id="n13_837" class="t m" style="left:919.00px;top:821.00px;font:400 17.2px/24px 'Liberation Mono', monospace;color:#8f8d89;letter-spacing:0.000px;letter-spacing:-0.1px;">13</div>
<div id="c13_837" class="t m" style="left:989.10px;top:821.01px;font:400 17.4px/24px 'Liberation Mono', monospace;color:#3b3e4e;letter-spacing:0.000px;letter-spacing:0.008px;">    <span style="color:#8f8d89">/// When true, interpret the pattern using *extended* regular expressions</span></div>
<div style="position:absolute;left:977px;top:845.2px;width:768px;height:27.700000000000045px;background:#dde9e3"></div>
<div style="position:absolute;left:977px;top:845.2px;width:2.2000000000000455px;height:27.700000000000045px;background:#2f8262"></div>
<div id="m14_864" class="t m" style="left:952.20px;top:849.02px;font:400 17.4px/24px 'Liberation Mono', monospace;color:#6db496;letter-spacing:0.000px;">+</div>
<div id="n14_864" class="t m" style="left:919.00px;top:849.01px;font:400 17.2px/24px 'Liberation Mono', monospace;color:#8f8d89;letter-spacing:0.000px;letter-spacing:-0.1px;">14</div>
<div id="c14_864" class="t m" style="left:989.10px;top:849.02px;font:400 17.4px/24px 'Liberation Mono', monospace;color:#3b3e4e;letter-spacing:0.000px;letter-spacing:0.008px;">    <span style="color:#8f8d89">/// (set by `-E` / `--extended-regex`).</span></div>
<div style="position:absolute;left:977px;top:872.8px;width:768px;height:27.700000000000045px;background:#dde9e3"></div>
<div style="position:absolute;left:977px;top:872.8px;width:2.2000000000000455px;height:27.700000000000045px;background:#2f8262"></div>
<div id="m15_892" class="t m" style="left:952.20px;top:876.01px;font:400 17.4px/24px 'Liberation Mono', monospace;color:#6db496;letter-spacing:0.000px;">+</div>
<div id="n15_892" class="t m" style="left:919.00px;top:876.00px;font:400 17.2px/24px 'Liberation Mono', monospace;color:#8f8d89;letter-spacing:0.000px;letter-spacing:-0.1px;">15</div>
<div id="c15_892" class="t m" style="left:989.10px;top:876.01px;font:400 17.4px/24px 'Liberation Mono', monospace;color:#3b3e4e;letter-spacing:0.000px;letter-spacing:0.008px;">    pub <span style="color:#d6858e">use_regex</span>: bool,</div>
<div id="n16_919" class="t m" style="left:919.00px;top:904.00px;font:400 17.2px/24px 'Liberation Mono', monospace;color:#8f8d89;letter-spacing:0.000px;letter-spacing:-0.1px;">16</div>
<div id="c16_919" class="t m" style="left:989.10px;top:904.01px;font:400 17.4px/24px 'Liberation Mono', monospace;color:#3b3e4e;letter-spacing:0.000px;letter-spacing:0.008px;">     pub <span style="color:#d6858e">verbose</span>: bool,</div>
<div id="n17_947" class="t m" style="left:919.00px;top:932.01px;font:400 17.2px/24px 'Liberation Mono', monospace;color:#8f8d89;letter-spacing:0.000px;letter-spacing:-0.1px;">17</div>
<div id="c17_947" class="t m" style="left:989.10px;top:932.00px;font:400 17.4px/24px 'Liberation Mono', monospace;color:#3b3e4e;letter-spacing:0.000px;letter-spacing:0.008px;"><span style="color:#6d6b68">}</span></div>
<div id="n18_975" class="t m" style="left:919.00px;top:959.00px;font:400 17.2px/24px 'Liberation Mono', monospace;color:#8f8d89;letter-spacing:0.000px;letter-spacing:-0.1px;">18</div>
<div id="c18_975" class="t m" style="left:989.10px;top:959.01px;font:400 17.4px/24px 'Liberation Mono', monospace;color:#3b3e4e;letter-spacing:0.000px;letter-spacing:0.008px;"></div>
</div></div>
</body></html>
